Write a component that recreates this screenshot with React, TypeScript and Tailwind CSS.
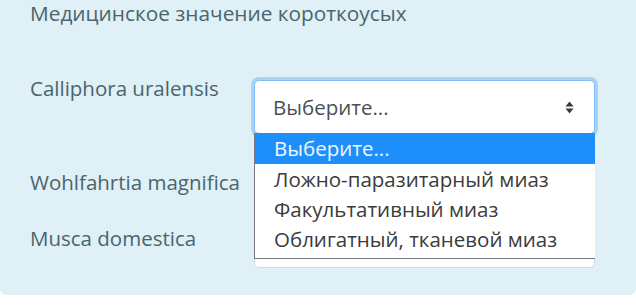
import React from "react";

const options = [
  "Выберите...",
  "Ложно-паразитарный миаз",
  "Факультативный миаз",
  "Облигатный, тканевой миаз",
];

function SortArrows() {
  return (
    <svg width="9" height="13" viewBox="0 0 9 13" className="text-[#343a40]">
      <path d="M4.5 0.5 L8.5 5.5 H0.5 Z" fill="currentColor" />
      <path d="M4.5 12.5 L8.5 7.5 H0.5 Z" fill="currentColor" />
    </svg>
  );
}

function SelectBox({ focused }: { focused?: boolean }) {
  return (
    <div
      className={
        focused
          ? "flex h-[54px] w-[341px] items-center justify-between rounded-[5px] border border-[#80bdff] bg-white pl-[18px] pr-[20px] shadow-[0_0_0_3px_#a9d3f0]"
          : "flex h-[54px] w-[341px] items-center justify-between rounded-[5px] border border-[#cfd8dc] bg-white pl-[18px] pr-[20px]"
      }
    >
      {/* closed selects lie under the open list, only the focused one shows its text */}
      {focused ? <span className="text-[20.5px] text-[#495057]">Выберите...</span> : <span />}
      <SortArrows />
    </div>
  );
}

export default function App() {
  return (
    <div
      className="relative h-[305px] w-[636px] overflow-hidden bg-white"
      style={{ fontFamily: '"Open Sans", "Noto Sans", sans-serif' }}
    >
      <div className="h-[295px] rounded-b-[6px] bg-[#dff0f6] pl-[30px] text-[#4a656e]">
        <div className="text-[20.8px] leading-[26px]">Медицинское значение короткоусых</div>

        <div className="mt-[54px] flex">
          <div className="-mt-[4px] w-[224px] text-[20.5px] leading-[24px]">Calliphora uralensis</div>
          <SelectBox focused />
        </div>

        <div className="mt-[24px] flex">
          <div className="mt-[12px] w-[224px] text-[20.5px] leading-[24px]">Wohlfahrtia magnifica</div>
          <SelectBox />
        </div>

        <div className="mt-[2px] flex">
          <div className="mt-[12px] w-[224px] text-[20.5px] leading-[24px]">Musca domestica</div>
          <SelectBox />
        </div>
      </div>

      <div className="absolute left-[254px] top-[133px] w-[341px] border-b border-l border-[#7a7a7a] bg-white pb-[4px]">
        {options.map((o, i) => (
          <div
            key={o}
            className={
              i === 0
                ? "flex h-[31px] items-center bg-[#1e8ffa] pl-[19px] text-[20.5px] text-[#eef6ff]"
                : "flex h-[30px] items-center pl-[19px] text-[20.5px] text-[#3b3b3b]"
            }
          >
            {o}
          </div>
        ))}
      </div>
    </div>
  );
}
